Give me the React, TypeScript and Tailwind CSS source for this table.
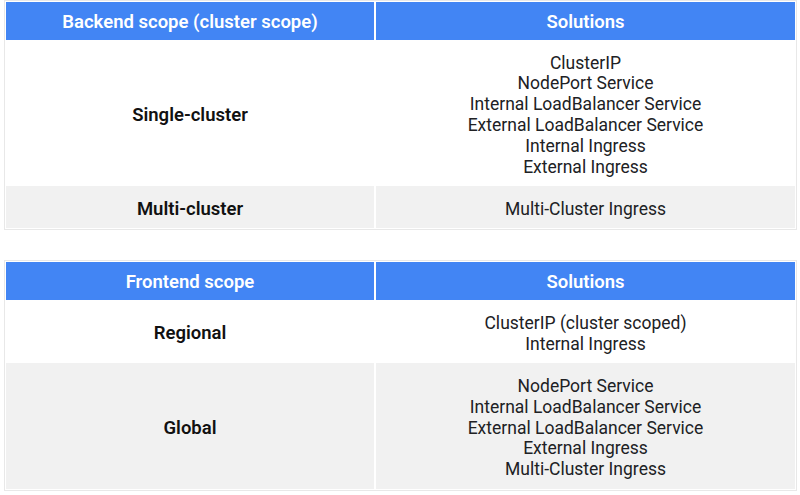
import React from "react";

type Row = { label: string; items: string[]; gray?: boolean; h: string };

function Table({ head, rows }: { head: string; rows: Row[] }) {
  return (
    <div className="ml-[4px] w-[793px] border border-[#e8e8e8] bg-white p-[1px]">
      <div className="grid grid-cols-[368px_419px] gap-[2px]">
        <div className="flex h-[38px] items-center justify-center bg-[#4285f4] pt-[4px] text-[18.5px] font-semibold text-white">
          {head}
        </div>
        <div className="flex h-[38px] items-center justify-center bg-[#4285f4] pt-[4px] text-[18.5px] font-semibold text-white">
          Solutions
        </div>
        {rows.map((r) => (
          <React.Fragment key={r.label}>
            <div
              className={`flex items-center justify-center pt-[5px] text-[18.5px] font-semibold text-[#111111] ${r.h} ${
                r.gray ? "bg-[#f1f1f1]" : "bg-white"
              }`}
            >
              {r.label}
            </div>
            <div
              className={`flex flex-col items-center justify-center pt-[4px] text-[17.5px] leading-[20.8px] text-[#202124] ${r.h} ${
                r.gray ? "bg-[#f1f1f1]" : "bg-white"
              }`}
            >
              {r.items.map((i) => (
                <div key={i}>{i}</div>
              ))}
            </div>
          </React.Fragment>
        ))}
      </div>
    </div>
  );
}

export default function App() {
  return (
    <div
      className="h-[495px] w-[800px] bg-white"
      style={{ fontFamily: "Roboto, 'Open Sans', sans-serif" }}
    >
      <Table
        head="Backend scope (cluster scope)"
        rows={[
          {
            label: "Single-cluster",
            h: "h-[142px]",
            items: [
              "ClusterIP",
              "NodePort Service",
              "Internal LoadBalancer Service",
              "External LoadBalancer Service",
              "Internal Ingress",
              "External Ingress",
            ],
          },
          { label: "Multi-cluster", h: "h-[42px]", items: ["Multi-Cluster Ingress"], gray: true },
        ]}
      />
      <div className="h-[30px]" />
      <Table
        head="Frontend scope"
        rows={[
          {
            label: "Regional",
            h: "h-[59px]",
            items: ["ClusterIP (cluster scoped)", "Internal Ingress"],
          },
          {
            label: "Global",
            h: "h-[126px]",
            items: [
              "NodePort Service",
              "Internal LoadBalancer Service",
              "External LoadBalancer Service",
              "External Ingress",
              "Multi-Cluster Ingress",
            ],
            gray: true,
          },
        ]}
      />
    </div>
  );
}
